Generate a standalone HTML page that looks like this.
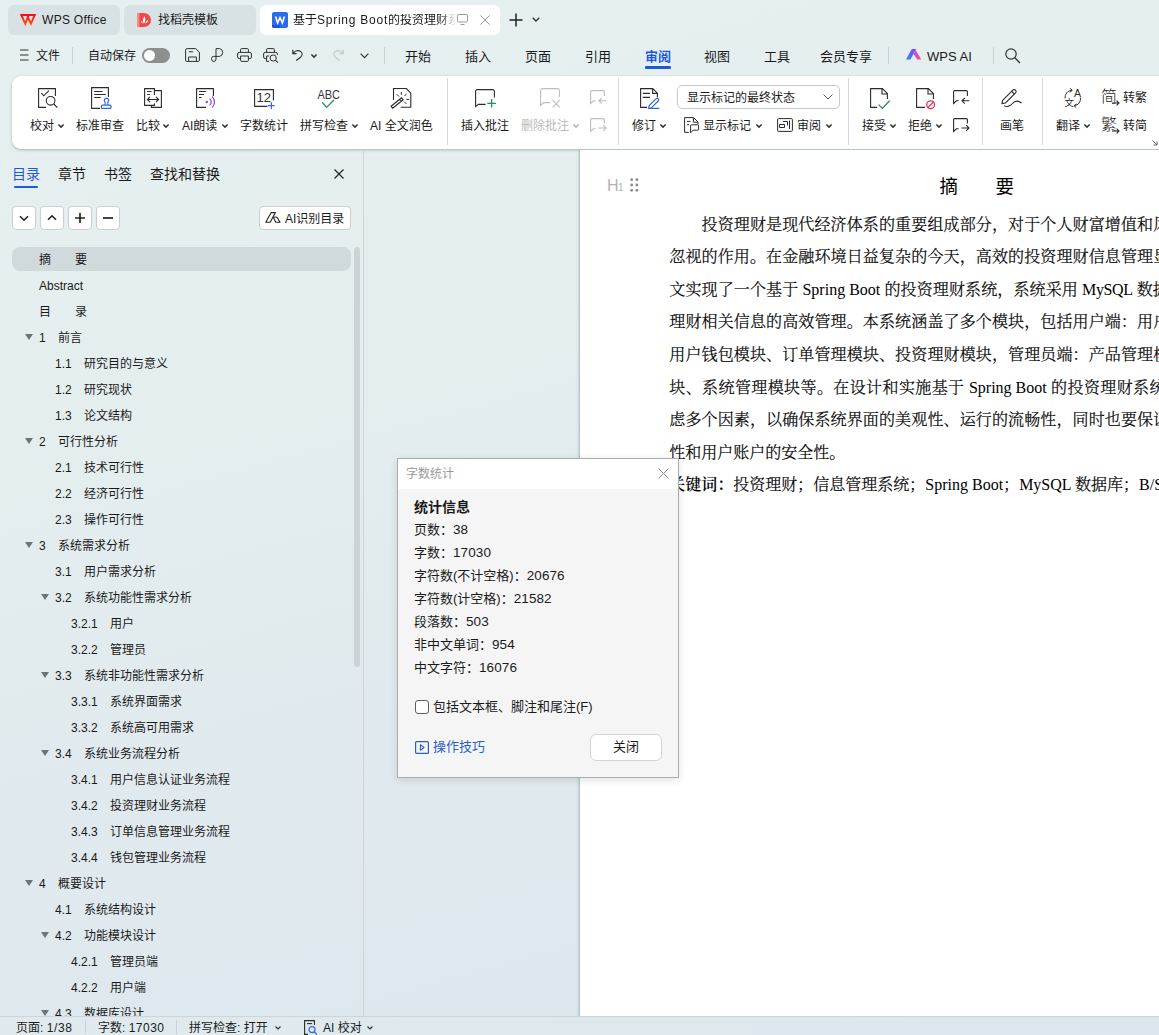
<!DOCTYPE html>
<html lang="zh-CN">
<head>
<meta charset="utf-8">
<title>WPS Office</title>
<style>
*{box-sizing:border-box;margin:0;padding:0}
html,body{width:1159px;height:1035px;overflow:hidden}
body{font-family:"Liberation Sans","Noto Sans CJK SC",sans-serif;font-size:13px;color:#1a1a1a;background:#e3edef;position:relative}
#app{position:absolute;left:0;top:0;width:1159px;height:1035px;overflow:hidden;background:linear-gradient(165deg,#e6f0f0 0%,#e4eeef 35%,#dfe9ee 70%,#dae6ee 100%)}
.abs{position:absolute}
svg{position:absolute;overflow:visible}
.t{position:absolute;white-space:nowrap;line-height:1}
/* ---------- title tabs ---------- */
.tab{position:absolute;top:5px;height:30px;border-radius:6px;background:#d8e1e4}
.tab.act{background:#fff}
.tab .t{top:9px;font-size:12px;color:#1a1a1a}
/* ---------- menu row ---------- */
.menu .t{top:50px;font-size:12px;color:#1a1a1a}
.menu .m{font-size:13px;top:50px}
.vsep{position:absolute;width:1px;background:#c9d3d7}
/* ---------- ribbon ---------- */
#ribbon{position:absolute;left:12px;top:75.500px;width:1160px;height:73.500px;background:#fff;border-radius:9px 0 0 9px;box-shadow:0 1px 3px rgba(100,120,130,.5)}
.rb .t{font-size:12px;color:#1a1a1a}
.rb .dis{color:#b9b9b9}
/* ---------- sidebar ---------- */
.stab{font-size:14px;top:167px}
.sbtn{position:absolute;top:206px;width:24px;height:24px;border:1px solid #c8cfd2;border-radius:4px;background:#fff}
.row{position:absolute;left:0;height:26px;width:352px;font-size:12px;color:#1a1a1a}
.row .t{top:8px}
.tri{position:absolute;top:10px;width:0;height:0;border-left:4px solid transparent;border-right:4px solid transparent;border-top:6px solid #6d7376}
/* ---------- document ---------- */
#page{position:absolute;left:579px;top:150px;width:600px;height:867px;background:#fff;border-left:1px solid #bcc1c4;box-shadow:-1px 0 2px rgba(120,140,150,.25)}
.en{letter-spacing:0;-webkit-text-stroke:0}
.en2{-webkit-text-stroke:0}
.dl{position:absolute;left:89.300px;margin-top:.5px;white-space:nowrap;font-family:"Liberation Serif","Noto Serif CJK SC",serif;font-weight:300;-webkit-text-stroke:.22px #000;font-size:16px;line-height:32px;height:32px;color:#000}
/* ---------- dialog ---------- */
#dlg{position:absolute;left:397px;top:458px;width:282px;height:320px;background:#f5f5f5;border:1px solid #a9adb0;box-shadow:0 2px 8px rgba(0,0,0,.12)}
#dlg .hd{position:absolute;left:0;top:0;width:280px;height:30px;background:#fff}
#dlg .n{font-size:13.500px;letter-spacing:.1px}
#dlg .t{font-size:13px;color:#1a1a1a;left:16px}
/* ---------- status ---------- */
#status{position:absolute;left:0;top:1016px;width:1159px;height:19px;background:linear-gradient(90deg,#e0eaee,#dbe7ed);border-top:1px solid #ccd6da}
#status .t{top:5px;font-size:12px}
</style>
</head>
<body>
<div id="app">
<!--TABS-->
<div class="tab" style="left:8px;width:112px">
  <svg style="left:12px;top:9px" width="17" height="12" viewBox="0 0 17 12"><defs><linearGradient id="wg" x1="0" y1="0" x2="0" y2="1"><stop offset="0" stop-color="#ff0a1c"/><stop offset="1" stop-color="#ff4d00"/></linearGradient></defs><path d="M1.300 1H7.200M1.300 1L5.300 9.800L8.700 1H14.800L10.900 9.800L8 3.600" fill="none" stroke="url(#wg)" stroke-width="1.900" stroke-linejoin="miter" stroke-linecap="square"/></svg>
  <div class="t" style="left:34px;letter-spacing:.3px">WPS Office</div>
</div>
<div class="tab" style="left:124px;width:132px">
  <svg style="left:13px;top:7px" width="14" height="16" viewBox="0 0 14 16"><path d="M0 1 H7 A7 7 0 0 1 7 15 H0 Z" fill="#ee4a49"/><path d="M0 1 H2.4 V15 H0Z" fill="#f58a86"/><path d="M7 11.5 C5.2 9.5 6 6.3 7.6 4.3 C8.6 6.8 8.6 9.4 7 11.5Z M8.2 11.3 C8.8 9.7 9.9 8.5 11.2 8 C11 9.8 10 11 8.2 11.3Z M5.9 11.2 C5.6 10 4.9 9.3 3.9 9 C4 10.3 4.7 11 5.9 11.2Z" fill="#fff"/></svg>
  <div class="t" style="left:34px">找稻壳模板</div>
</div>
<div class="tab act" style="left:260px;width:240px">
  <svg style="left:12px;top:7px" width="16" height="16" viewBox="0 0 16 16"><rect width="16" height="16" rx="2" fill="#2b6de9"/><path d="M0 13h8v3H2a2 2 0 0 1-2-2z" fill="#1f56c8"/><path d="M3.600 4.400L5.600 10.800L8 5.600L10.400 10.800L12.400 4.400" fill="none" stroke="#fff" stroke-width="1.600" stroke-linejoin="miter"/></svg>
  <div class="t" style="left:33px;width:164px;overflow:hidden;-webkit-mask-image:linear-gradient(90deg,#000 146px,transparent 163px);mask-image:linear-gradient(90deg,#000 146px,transparent 163px);height:16px">基于<span style="letter-spacing:.75px">Spring Boot</span>的投资理财系统的设计</div>
  <svg style="left:197px;top:9px" width="13" height="12" viewBox="0 0 13 12"><rect x="0.5" y="0.5" width="10" height="7.500" rx="1.300" fill="none" stroke="#959a9e" stroke-width="1"/><path d="M3.500 10.500h4" stroke="#959a9e" stroke-width="1"/></svg>
  <svg style="left:219.500px;top:10px" width="10" height="10" viewBox="0 0 10 10"><path d="M.4 .4L9.600 9.600M9.600 .4L.4 9.600" stroke="#959a9e" stroke-width="1"/></svg>
</div>
<svg style="left:509px;top:13px" width="14" height="14" viewBox="0 0 14 14"><path d="M7 0.5V13.5M0.5 7H13.5" stroke="#222" stroke-width="1.5"/></svg>
<svg style="left:532px;top:17px" width="8" height="5" viewBox="0 0 8 5"><path d="M0.7 0.7L4 4L7.3 0.7" fill="none" stroke="#333" stroke-width="1.3"/></svg>
<!--MENU-->
<div class="menu">
  <svg style="left:20px;top:49px" width="9" height="12" viewBox="0 0 9 12"><path d="M0 1h8.5M0 6h8.5M0 11h8.5" stroke="#2e2e2e" stroke-width="1"/></svg>
  <div class="t" style="left:36px">文件</div>
  <div class="vsep" style="left:72px;top:47px;height:17px"></div>
  <div class="t" style="left:88px">自动保存</div>
  <div class="abs" style="left:142px;top:48px;width:28px;height:15px;border-radius:8px;background:#8e8e8e"></div>
  <div class="abs" style="left:144px;top:50px;width:11px;height:11px;border-radius:6px;background:#fff"></div>
  <!-- save -->
  <svg style="left:185px;top:48px" width="15" height="14" viewBox="0 0 15 14"><path d="M0.6 12.4V2.2A1.6 1.6 0 0 1 2.2 .6H10.6L14.4 4.2V12.4A1 1 0 0 1 13.4 13.4H1.6A1 1 0 0 1 .6 12.4Z" fill="none" stroke="#2e2e2e" stroke-width="1"/><path d="M3.6 13.2V9H11.4V13.2M3.8 3.8H8" fill="none" stroke="#2e2e2e" stroke-width="1"/></svg>
  <!-- export/pdf -->
  <svg style="left:211px;top:48px" width="14" height="14" viewBox="0 0 14 14"><path d="M5 .6H8.6A4 4 0 0 1 8.6 8.4H5V.6M5 8.4V11.2A2.2 2.2 0 0 1 .6 11.2V10.4A2 2 0 0 1 2.6 8.4H5" fill="none" stroke="#2e2e2e" stroke-width="1"/></svg>
  <!-- print -->
  <svg style="left:237px;top:48px" width="15" height="14" viewBox="0 0 15 14"><path d="M3.6 4.4V1.6A1 1 0 0 1 4.6 .6H10.4A1 1 0 0 1 11.4 1.6V4.4M3.6 10.6H2.2A1.6 1.6 0 0 1 .6 9V6A1.6 1.6 0 0 1 2.2 4.4H12.8A1.6 1.6 0 0 1 14.4 6V9A1.6 1.6 0 0 1 12.8 10.6H11.4M3.6 8H11.4V12.4A1 1 0 0 1 10.4 13.4H4.6A1 1 0 0 1 3.6 12.4Z" fill="none" stroke="#2e2e2e" stroke-width="1"/></svg>
  <!-- preview -->
  <svg style="left:263px;top:48px" width="16" height="15" viewBox="0 0 16 15"><path d="M3.6 4.4V1.6A1 1 0 0 1 4.6 .6H10.4A1 1 0 0 1 11.4 1.6V4.4M3.6 10.6H2.2A1.6 1.6 0 0 1 .6 9V6A1.6 1.6 0 0 1 2.2 4.4H12.8A1.6 1.6 0 0 1 14.4 6V7M3.6 13.4V8H6.2M3.6 13.4H6" fill="none" stroke="#2e2e2e" stroke-width="1"/><circle cx="10.2" cy="10" r="3.1" fill="none" stroke="#2e2e2e" stroke-width="1"/><path d="M12.5 12.3L15 14.6" stroke="#2e2e2e" stroke-width="1.100"/></svg>
  <!-- undo -->
  <svg style="left:292px;top:49px" width="12" height="12" viewBox="0 0 12 12"><path d="M.8 .8V4.6H4.6M1 4.4C3 1.4 6.6 .9 8.8 2.6C11 4.3 10.3 6.7 8.6 8.2L4.2 11.5" fill="none" stroke="#2e2e2e" stroke-width="1.100"/></svg>
  <svg style="left:311px;top:54px" width="6" height="4" viewBox="0 0 6 4"><path d="M.4 .5L3 3.100L5.600 .5" fill="none" stroke="#333" stroke-width="1.500"/></svg>
  <!-- redo (disabled) -->
  <svg style="left:333px;top:49px" width="12" height="12" viewBox="0 0 12 12"><path d="M10.2 .8V4.6H6.4M10 4.4C8 1.4 4.4 .9 2.2 2.6C0 4.3 .7 6.7 2.4 8.2L6.8 11.5" fill="none" stroke="#c3c9cc" stroke-width="1.2"/></svg>
  <svg style="left:360px;top:53px" width="9" height="6" viewBox="0 0 9 6"><path d="M.6 .6L4.5 4.6L8.4 .6" fill="none" stroke="#333" stroke-width="1.2"/></svg>
  <div class="vsep" style="left:384px;top:47px;height:17px"></div>
  <div class="t m" style="left:405px">开始</div>
  <div class="t m" style="left:465px">插入</div>
  <div class="t m" style="left:525px">页面</div>
  <div class="t m" style="left:585px">引用</div>
  <div class="t m" style="left:645px;color:#1f5ad6;font-weight:bold">审阅</div>
  <div class="abs" style="left:645px;top:66px;width:26px;height:2.500px;border-radius:1.250px;background:#1f5ad6"></div>
  <div class="t m" style="left:704px">视图</div>
  <div class="t m" style="left:764px">工具</div>
  <div class="t m" style="left:820px">会员专享</div>
  <div class="vsep" style="left:888px;top:47px;height:17px"></div>
  <svg style="left:906px;top:49px" width="16" height="11" viewBox="0 0 16 11"><defs><linearGradient id="ai1" x1="0" y1="1" x2="1" y2="0"><stop offset="0" stop-color="#2a86ff"/><stop offset="1" stop-color="#8a48fb"/></linearGradient><linearGradient id="ai2" x1="0" y1="0" x2="1" y2="1"><stop offset="0" stop-color="#b44dfa"/><stop offset="1" stop-color="#ff4f86"/></linearGradient></defs><path d="M0 10.600H4.400L10.300 0H5.800Z" fill="url(#ai1)"/><path d="M7.600 5L9.700 1.200L15.400 10.600H11.200Z" fill="url(#ai2)"/></svg>
  <div class="t m" style="left:927px">WPS AI</div>
  <div class="vsep" style="left:993px;top:47px;height:17px"></div>
  <svg style="left:1005px;top:48px" width="16" height="16" viewBox="0 0 16 16"><circle cx="6" cy="6" r="5.2" fill="none" stroke="#333" stroke-width="1.2"/><path d="M9.8 9.8L15 15" stroke="#333" stroke-width="1.3"/></svg>
</div>
<!--RIBBON-->
<div id="ribbon"></div>
<div class="rb">
  <!-- 校对 -->
  <svg style="left:38px;top:88px" width="20" height="20" viewBox="0 0 20 20"><path d="M8 19.4H.6V.6H17.4V8" stroke="#2b2b2b" stroke-width="1.1" fill="none"/><path d="M3.4 5.2L5.7 7.8L11 2.6" stroke="#2b2b2b" stroke-width="1.1" fill="none"/><circle cx="12.6" cy="12.8" r="4.3" stroke="#2b2b2b" stroke-width="1.1" fill="none"/><path d="M15.8 16L19.4 19.6" stroke="#2b2b2b" stroke-width="1.1" fill="none"/></svg>
  <div class="t" style="left:30px;top:119.500px">校对</div><svg style="left:58px;top:124px" width="6" height="4" viewBox="0 0 6 4"><path d="M.4 .5L3 3.100L5.600 .5" fill="none" stroke="#333" stroke-width="1.500"/></svg>
  <!-- 标准审查 -->
  <svg style="left:91px;top:87px" width="21" height="22" viewBox="0 0 21 22"><path d="M9 21.400H.6V.6H17.400V10" stroke="#2b2b2b" stroke-width="1.1" fill="none"/><path d="M3.200 4.500H11.600M3.200 7.500H14.800M3.200 10.500H9.700" stroke="#2b2b2b" stroke-width="1.1" fill="none"/><path d="M13.800 18.200C14.600 16.800 14.400 15.800 13.800 14.600A2.100 2.100 0 1 1 17.200 14.600C16.600 15.800 16.400 16.800 17.200 18.200M11.400 18.200H19A1 1 0 0 1 20 19.200V20.400A1 1 0 0 1 19 21.400H11.400A1 1 0 0 1 10.400 20.400V19.200A1 1 0 0 1 11.400 18.200Z" fill="none" stroke="#2f62ea" stroke-width="1.200"/></svg>
  <div class="t" style="left:76px;top:119.500px">标准审查</div>
  <!-- 比较 -->
  <svg style="left:144px;top:88px" width="19" height="20" viewBox="0 0 19 20"><path d="M10.400 7V.6H.6V17.400H10.400V15.400" stroke="#2b2b2b" stroke-width="1.1" fill="none"/><path d="M10.400 2.600H17.400V19.400H7.400V17.400" stroke="#2b2b2b" stroke-width="1.1" fill="none"/><path d="M3.200 3.500H7.600M3.200 6.500H5.800" stroke="#2b2b2b" stroke-width="1.1" fill="none"/><path d="M3.400 11.500H14.600M6 8.900L3.400 11.500L6 14.100M12 8.900L14.600 11.500L12 14.100" stroke="#2b2b2b" stroke-width="1.1" fill="none"/></svg>
  <div class="t" style="left:136px;top:119.500px">比较</div><svg style="left:163px;top:124px" width="6" height="4" viewBox="0 0 6 4"><path d="M.4 .5L3 3.100L5.600 .5" fill="none" stroke="#333" stroke-width="1.500"/></svg>
  <!-- AI朗读 -->
  <svg style="left:196px;top:88px" width="20" height="20" viewBox="0 0 20 20"><path d="M10 19.400H.6V.6H17.400V8" stroke="#2b2b2b" stroke-width="1.1" fill="none"/><path d="M3 3.500H10.200M3 6.500H8M3 9.500H5.600" stroke="#2b2b2b" stroke-width="1.1" fill="none"/><circle cx="10.800" cy="14" r="1.200" fill="#8b44f0"/><path d="M13.600 10.600A4.500 4.500 0 0 1 13.600 17.400M16 8.400A7.600 7.600 0 0 1 16 19.600" fill="none" stroke="#8b44f0" stroke-width="1.200"/></svg>
  <div class="t" style="left:182px;top:119.500px">AI朗读</div><svg style="left:222px;top:124px" width="6" height="4" viewBox="0 0 6 4"><path d="M.4 .5L3 3.100L5.600 .5" fill="none" stroke="#333" stroke-width="1.500"/></svg>
  <!-- 字数统计 -->
  <svg style="left:254px;top:89px" width="22" height="20" viewBox="0 0 22 20"><path d="M13.500 17.400H.6V.6H19.400V11.500" stroke="#2b2b2b" stroke-width="1.1" fill="none"/><text x="2.400" y="13.300" font-family="Liberation Sans, sans-serif" font-size="13.500" fill="#333" textLength="14.500" lengthAdjust="spacingAndGlyphs">12</text><path d="M17.400 13.200V20M14 16.600H20.800" stroke="#2f66ee" stroke-width="1.200" fill="none"/></svg>
  <div class="t" style="left:240px;top:119.500px">字数统计</div>
  <!-- 拼写检查 -->
  <svg style="left:317px;top:88px" width="24" height="21" viewBox="0 0 24 21"><text x=".5" y="10.800" font-family="Liberation Sans, sans-serif" font-size="13.500" fill="#333" textLength="22.500" lengthAdjust="spacingAndGlyphs">ABC</text><path d="M5.300 14.400L9.500 19.400L17 12" fill="none" stroke="#1c8f5c" stroke-width="1.300"/></svg>
  <div class="t" style="left:300px;top:119.500px">拼写检查</div><svg style="left:352px;top:124px" width="6" height="4" viewBox="0 0 6 4"><path d="M.4 .5L3 3.100L5.600 .5" fill="none" stroke="#333" stroke-width="1.500"/></svg>
  <!-- AI 全文润色 -->
  <svg style="left:391px;top:87px" width="21" height="22" viewBox="0 0 21 22"><path d="M2.500 13V1.500H15.400L19.800 6.200V20.200H9.700" stroke="#2b2b2b" stroke-width="1.1" fill="none"/><path d="M0 19.200L1.600 21.200L12.200 12.800L10.600 10.800ZM8.500 12.500L10.100 14.500" stroke="#2b2b2b" stroke-width="1.1" fill="none" stroke-linejoin="round"/><path d="M10.300 5.100V7.900M15.400 6.800L13.700 9M15.400 12.400H18.200M13.100 14.600L15.400 16.900M5.800 7.300L8.100 9.600" stroke="#2b2b2b" stroke-width="1" fill="none"/></svg>
  <div class="t" style="left:370px;top:119.500px">AI 全文润色</div>
  <div class="vsep" style="left:447px;top:78px;height:67px;background:#d6d8da"></div>
  <!-- 插入批注 -->
  <svg style="left:475px;top:89px" width="22" height="20" viewBox="0 0 22 20"><path d="M19.400 8.600V2.200A1.600 1.600 0 0 0 17.800 .6H2.200A1.600 1.600 0 0 0 .6 2.200V17.600L3.400 15.400H10.600" stroke="#2b2b2b" stroke-width="1.1" fill="none" stroke-width="1.300"/><path d="M16.600 10V18.600M12.300 14.300H20.900" stroke="#1c8f5c" stroke-width="1.300" fill="none"/></svg>
  <div class="t" style="left:461px;top:119.500px">插入批注</div>
  <!-- 删除批注 -->
  <svg style="left:540px;top:88px" width="22" height="20" viewBox="0 0 22 20"><path d="M19.400 9V2.200A1.600 1.600 0 0 0 17.800 .6H2.200A1.600 1.600 0 0 0 .6 2.200V17.400L3.600 14.600H10M12.600 12.200L19.800 19.400M19.800 12.200L12.600 19.400" fill="none" stroke="#bdbdbd" stroke-width="1.100"/></svg>
  <div class="t dis" style="left:521px;top:119.500px">删除批注</div><svg style="left:573px;top:124px" width="6" height="4" viewBox="0 0 6 4"><path d="M.4 .5L3 3.100L5.600 .5" fill="none" stroke="#b5b5b5" stroke-width="1.500"/></svg>
  <svg style="left:590px;top:90px" width="17" height="14" viewBox="0 0 17 14"><path d="M14.400 6V1.600A1 1 0 0 0 13.400 .6H1.600A1 1 0 0 0 .6 1.600V13.400L3.400 10.800H5.600M9 10.800H16.200M11.800 8L9 10.800L11.800 13.600" fill="none" stroke="#bdbdbd" stroke-width="1.100"/></svg>
  <svg style="left:590px;top:118px" width="17" height="14" viewBox="0 0 17 14"><path d="M14.400 5.600V1.600A1 1 0 0 0 13.400 .6H1.600A1 1 0 0 0 .6 1.600V13.400L3.400 10.800H5.600M8.400 10H16M13.200 7.200L16 10L13.200 12.800" fill="none" stroke="#bdbdbd" stroke-width="1.100"/></svg>
  <div class="vsep" style="left:618px;top:78px;height:67px;background:#d6d8da"></div>
  <!-- 修订 -->
  <svg style="left:640px;top:88px" width="22" height="21" viewBox="0 0 22 21"><path d="M7 19.400H.6V.6H12.800L17.400 5.200V9.600M12.600 .8V5.400H17.200" stroke="#2b2b2b" stroke-width="1.1" fill="none"/><path d="M2.800 5.400H10M2.800 9.400H10" stroke="#2b2b2b" stroke-width="1.1" fill="none"/><path d="M8.600 20.200L9.200 17.600L16 10.800A1.500 1.500 0 0 1 18.200 13L11.400 19.800L8.600 20.200ZM8.600 20.400H19.400" fill="none" stroke="#2f66ee" stroke-width="1.200"/></svg>
  <div class="t" style="left:632px;top:119.500px">修订</div><svg style="left:659.500px;top:124px" width="6" height="4" viewBox="0 0 6 4"><path d="M.4 .5L3 3.100L5.600 .5" fill="none" stroke="#333" stroke-width="1.500"/></svg>
  <div class="abs" style="left:677px;top:85px;width:163px;height:24px;border:1px solid #c6c9cb;border-radius:5px;background:#fff"></div>
  <div class="t" style="left:687px;top:92px">显示标记的最终状态</div>
  <svg style="left:823px;top:94px" width="10" height="6" viewBox="0 0 10 6"><path d="M.6 .6L5 5L9.400 .6" fill="none" stroke="#555" stroke-width="1"/></svg>
  <!-- 显示标记 -->
  <svg style="left:684px;top:117px" width="16" height="17" viewBox="0 0 16 17"><path d="M4.800 15.400H.6V.6H9.600L14 5V7.400M9.400 .8V5.200H13.800" stroke="#2b2b2b" stroke-width="1" fill="none"/><path d="M3 4.400H6.600M3 7.700H5.200" stroke="#2b2b2b" stroke-width="1" fill="none"/><path d="M6.600 15.800V8.600A.8 .8 0 0 1 7.400 7.800H13.800A.8 .8 0 0 1 14.600 8.600V12.400A.8 .8 0 0 1 13.800 13.200H9.200Z" stroke="#2b2b2b" stroke-width="1" fill="none" stroke-linejoin="round"/></svg>
  <div class="t" style="left:703px;top:119.500px">显示标记</div><svg style="left:756px;top:124px" width="6" height="4" viewBox="0 0 6 4"><path d="M.4 .5L3 3.100L5.600 .5" fill="none" stroke="#333" stroke-width="1.500"/></svg>
  <!-- 审阅 -->
  <svg style="left:777px;top:118px" width="16" height="14" viewBox="0 0 16 14"><rect x=".6" y=".6" width="14.800" height="12.800" rx="1" stroke="#2b2b2b" stroke-width="1" fill="none" stroke-width="1.100"/><path d="M6 3.500H10.500V7.500M2.500 6.500H7.500V9.500H2.500ZM12.500 2.500V11" stroke="#2b2b2b" stroke-width="1" fill="none"/></svg>
  <div class="t" style="left:797px;top:119.500px">审阅</div><svg style="left:826px;top:124px" width="6" height="4" viewBox="0 0 6 4"><path d="M.4 .5L3 3.100L5.600 .5" fill="none" stroke="#333" stroke-width="1.500"/></svg>
  <div class="vsep" style="left:848px;top:78px;height:67px;background:#d6d8da"></div>
  <!-- 接受 -->
  <svg style="left:869px;top:88px" width="22" height="22" viewBox="0 0 22 22"><path d="M8 19.400H1.600V.6H13.400L18.400 5.600V11M13 .8V6H18.200" stroke="#2b2b2b" stroke-width="1.1" fill="none"/><path d="M9.600 16.600L13.400 20.400L20.600 12.800" fill="none" stroke="#1c8f5c" stroke-width="1.300"/></svg>
  <div class="t" style="left:862px;top:119.500px">接受</div><svg style="left:890px;top:124px" width="6" height="4" viewBox="0 0 6 4"><path d="M.4 .5L3 3.100L5.600 .5" fill="none" stroke="#333" stroke-width="1.500"/></svg>
  <!-- 拒绝 -->
  <svg style="left:916px;top:88px" width="20" height="22" viewBox="0 0 20 22"><path d="M9 19.400H.6V.6H12.400L17.400 5.600V11M12 .8V6H17.200" stroke="#2b2b2b" stroke-width="1.1" fill="none"/><circle cx="14.600" cy="16.800" r="3.900" fill="none" stroke="#e0334f" stroke-width="1.300"/><path d="M11.800 19.600L17.400 14" stroke="#e0334f" stroke-width="1.300"/></svg>
  <div class="t" style="left:908px;top:119.500px">拒绝</div><svg style="left:936px;top:124px" width="6" height="4" viewBox="0 0 6 4"><path d="M.4 .5L3 3.100L5.600 .5" fill="none" stroke="#333" stroke-width="1.500"/></svg>
  <svg style="left:953px;top:90px" width="17" height="14" viewBox="0 0 17 14"><path d="M14.400 6V1.600A1 1 0 0 0 13.400 .6H1.600A1 1 0 0 0 .6 1.600V13.400L3.400 10.800H5.600M9 10.800H16.200M11.800 8L9 10.800L11.800 13.600" stroke="#2b2b2b" stroke-width="1.1" fill="none"/></svg>
  <svg style="left:953px;top:118px" width="17" height="14" viewBox="0 0 17 14"><path d="M14.400 5.600V1.600A1 1 0 0 0 13.400 .6H1.600A1 1 0 0 0 .6 1.600V13.400L3.400 10.800H5.600M8.400 10H16M13.200 7.200L16 10L13.200 12.800" stroke="#2b2b2b" stroke-width="1.1" fill="none"/></svg>
  <div class="vsep" style="left:982px;top:78px;height:67px;background:#d6d8da"></div>
  <!-- 画笔 -->
  <svg style="left:1001px;top:89px" width="22" height="18" viewBox="0 0 22 18"><path d="M1.600 11.400L11.800 1.200A1.800 1.800 0 0 1 14.600 3.800L4.400 14L1 14.600Z" stroke="#2b2b2b" stroke-width="1.1" fill="none"/><path d="M10.800 2.400L13.400 5" stroke="#2b2b2b" stroke-width="1.1" fill="none"/><path d="M3 16.600C6 18.400 9.500 17 11.500 14.500C13.500 12 17 11.400 20.600 14" stroke="#2b2b2b" stroke-width="1.1" fill="none"/></svg>
  <div class="t" style="left:1000px;top:119.500px">画笔</div>
  <div class="vsep" style="left:1042px;top:78px;height:67px;background:#d6d8da"></div>
  <!-- 翻译 -->
  <svg style="left:1064px;top:88px" width="18" height="20" viewBox="0 0 18 20"><path d="M1.200 10.400C.6 6.400 3.400 2.600 8 2.300M6 .3L8.300 2.300L5.800 4.300" stroke="#2b2b2b" stroke-width="1" fill="none"/><path d="M16.400 9.600C17 13.600 14.400 17.300 10.200 17.700M12.600 15.900L10 17.700L12.200 19.700" stroke="#2b2b2b" stroke-width="1" fill="none"/><text x="10" y="8.900" font-family="Liberation Sans, sans-serif" font-size="10.500" fill="#2b2b2b">A</text><text x=".6" y="17.800" font-family="Liberation Sans, Noto Sans CJK SC, sans-serif" font-size="9.500" fill="#2b2b2b">文</text></svg>
  <div class="t" style="left:1056px;top:119.500px">翻译</div><svg style="left:1084px;top:124px" width="6" height="4" viewBox="0 0 6 4"><path d="M.4 .5L3 3.100L5.600 .5" fill="none" stroke="#333" stroke-width="1.500"/></svg>
  <!-- 简转繁 -->
  <div class="t" style="left:1101px;top:88.500px;font-size:16px;color:#222;font-weight:300">简</div>
  <svg style="left:1112px;top:99.500px" width="8" height="6" viewBox="0 0 8 6"><path d="M0 3H7M4.600 .6L7 3L4.600 5.400" stroke="#2b2b2b" stroke-width="1.1" fill="none"/></svg>
  <div class="t" style="left:1123px;top:92px">转繁</div>
  <div class="t" style="left:1101px;top:116.500px;font-size:16px;color:#222;font-weight:300">繁</div>
  <svg style="left:1112px;top:127.500px" width="8" height="6" viewBox="0 0 8 6"><path d="M0 3H7M4.600 .6L7 3L4.600 5.400" stroke="#2b2b2b" stroke-width="1.1" fill="none"/></svg>
  <div class="t" style="left:1123px;top:119.500px">转简</div>
  <svg style="left:1152px;top:140px" width="6" height="6" viewBox="0 0 6 6"><path d="M.5 .5L5 5M5 1.500V5H1.500" fill="none" stroke="#666" stroke-width="1"/></svg>
</div>
<!--SIDEBAR-->
<div id="side">
  <div class="vsep" style="left:363px;top:150px;height:867px;width:1.400px;background:#d3d3d4"></div>
  <div class="t stab" style="left:12px;color:#1f5ad6">目录</div>
  <div class="abs" style="left:14px;top:186px;width:24px;height:2px;background:#1f5ad6;border-radius:1px"></div>
  <div class="t stab" style="left:58px">章节</div>
  <div class="t stab" style="left:104px">书签</div>
  <div class="t stab" style="left:150px">查找和替换</div>
  <svg style="left:334px;top:169px" width="10" height="10" viewBox="0 0 10 10"><path d="M.5 .5L9.500 9.500M9.500 .5L.5 9.500" stroke="#222" stroke-width="1.200"/></svg>
  <div class="sbtn" style="left:12px"><svg style="left:5px;top:5px" width="12" height="12" viewBox="0 0 12 12"><path d="M2 4.200L6 8.200L10 4.200" fill="none" stroke="#222" stroke-width="1.600"/></svg></div>
  <div class="sbtn" style="left:40px"><svg style="left:5px;top:5px" width="12" height="12" viewBox="0 0 12 12"><path d="M2 7.800L6 3.800L10 7.800" fill="none" stroke="#222" stroke-width="1.600"/></svg></div>
  <div class="sbtn" style="left:68px"><svg style="left:5px;top:5px" width="12" height="12" viewBox="0 0 12 12"><path d="M6 1V11M1 6H11" fill="none" stroke="#222" stroke-width="1.700"/></svg></div>
  <div class="sbtn" style="left:96px"><svg style="left:5px;top:5px" width="12" height="12" viewBox="0 0 12 12"><path d="M1 6H11" fill="none" stroke="#222" stroke-width="1.700"/></svg></div>
  <div class="abs" style="left:259px;top:206px;width:92px;height:24px;border:1px solid #c8cfd2;border-radius:4px;background:#fff"></div>
  <svg style="left:265px;top:212px" width="16" height="11" viewBox="0 0 16 11"><path d="M.8 10.200H5.200L10.400 .6H6.200Z" fill="none" stroke="#222" stroke-width="1.100" stroke-linejoin="round"/><path d="M7.600 5.600C9.600 4.400 12 5 12.800 6.400L15 10.200H10.800L8.600 6" fill="none" stroke="#222" stroke-width="1.100" stroke-linejoin="round"/></svg>
  <div class="t" style="left:285px;top:213px;font-size:12px">AI识别目录</div>
  <div class="abs" style="left:12px;top:247px;width:339px;height:24px;border-radius:8px;background:#d0d9dc"></div>
  <div class="abs" style="left:354px;top:247px;width:6px;height:420px;border-radius:3px;background:#ccd3d6"></div>
  <div class="row" style="top:246px"><div class="t" style="left:39px">摘　　要</div></div>
  <div class="row" style="top:272px"><div class="t" style="left:39px">Abstract</div></div>
  <div class="row" style="top:298px"><div class="t" style="left:39px">目　　录</div></div>
  <div class="row" style="top:324px"><div class="tri" style="left:25px"></div><div class="t" style="left:39px">1</div><div class="t" style="left:58px">前言</div></div>
  <div class="row" style="top:350px"><div class="t" style="left:55px">1.1</div><div class="t" style="left:84px">研究目的与意义</div></div>
  <div class="row" style="top:376px"><div class="t" style="left:55px">1.2</div><div class="t" style="left:84px">研究现状</div></div>
  <div class="row" style="top:402px"><div class="t" style="left:55px">1.3</div><div class="t" style="left:84px">论文结构</div></div>
  <div class="row" style="top:428px"><div class="tri" style="left:25px"></div><div class="t" style="left:39px">2</div><div class="t" style="left:58px">可行性分析</div></div>
  <div class="row" style="top:454px"><div class="t" style="left:55px">2.1</div><div class="t" style="left:84px">技术可行性</div></div>
  <div class="row" style="top:480px"><div class="t" style="left:55px">2.2</div><div class="t" style="left:84px">经济可行性</div></div>
  <div class="row" style="top:506px"><div class="t" style="left:55px">2.3</div><div class="t" style="left:84px">操作可行性</div></div>
  <div class="row" style="top:532px"><div class="tri" style="left:25px"></div><div class="t" style="left:39px">3</div><div class="t" style="left:58px">系统需求分析</div></div>
  <div class="row" style="top:558px"><div class="t" style="left:55px">3.1</div><div class="t" style="left:84px">用户需求分析</div></div>
  <div class="row" style="top:584px"><div class="tri" style="left:41px"></div><div class="t" style="left:55px">3.2</div><div class="t" style="left:84px">系统功能性需求分析</div></div>
  <div class="row" style="top:610px"><div class="t" style="left:71px">3.2.1</div><div class="t" style="left:110px">用户</div></div>
  <div class="row" style="top:636px"><div class="t" style="left:71px">3.2.2</div><div class="t" style="left:110px">管理员</div></div>
  <div class="row" style="top:662px"><div class="tri" style="left:41px"></div><div class="t" style="left:55px">3.3</div><div class="t" style="left:84px">系统非功能性需求分析</div></div>
  <div class="row" style="top:688px"><div class="t" style="left:71px">3.3.1</div><div class="t" style="left:110px">系统界面需求</div></div>
  <div class="row" style="top:714px"><div class="t" style="left:71px">3.3.2</div><div class="t" style="left:110px">系统高可用需求</div></div>
  <div class="row" style="top:740px"><div class="tri" style="left:41px"></div><div class="t" style="left:55px">3.4</div><div class="t" style="left:84px">系统业务流程分析</div></div>
  <div class="row" style="top:766px"><div class="t" style="left:71px">3.4.1</div><div class="t" style="left:110px">用户信息认证业务流程</div></div>
  <div class="row" style="top:792px"><div class="t" style="left:71px">3.4.2</div><div class="t" style="left:110px">投资理财业务流程</div></div>
  <div class="row" style="top:818px"><div class="t" style="left:71px">3.4.3</div><div class="t" style="left:110px">订单信息管理业务流程</div></div>
  <div class="row" style="top:844px"><div class="t" style="left:71px">3.4.4</div><div class="t" style="left:110px">钱包管理业务流程</div></div>
  <div class="row" style="top:870px"><div class="tri" style="left:25px"></div><div class="t" style="left:39px">4</div><div class="t" style="left:58px">概要设计</div></div>
  <div class="row" style="top:896px"><div class="t" style="left:55px">4.1</div><div class="t" style="left:84px">系统结构设计</div></div>
  <div class="row" style="top:922px"><div class="tri" style="left:41px"></div><div class="t" style="left:55px">4.2</div><div class="t" style="left:84px">功能模块设计</div></div>
  <div class="row" style="top:948px"><div class="t" style="left:71px">4.2.1</div><div class="t" style="left:110px">管理员端</div></div>
  <div class="row" style="top:974px"><div class="t" style="left:71px">4.2.2</div><div class="t" style="left:110px">用户端</div></div>
  <div class="row" style="top:1000px"><div class="tri" style="left:41px"></div><div class="t" style="left:55px">4.3</div><div class="t" style="left:84px">数据库设计</div></div>
</div>
<!--PAGE-->
<div id="page">
  <div class="t" style="left:27px;top:28px;font-size:16px;color:#b3b3b3;font-weight:300;letter-spacing:-.5px">H<span style="font-size:10px;font-weight:400">1</span></div>
  <svg style="left:50px;top:28px" width="9" height="14" viewBox="0 0 9 14"><g fill="#8a8a8a"><circle cx="1.700" cy="1.700" r="1.400"/><circle cx="6.900" cy="1.700" r="1.400"/><circle cx="1.700" cy="7" r="1.400"/><circle cx="6.900" cy="7" r="1.400"/><circle cx="1.700" cy="12.300" r="1.400"/><circle cx="6.900" cy="12.300" r="1.400"/></g></svg>
  <div class="t" style="left:359.500px;top:28px;font-size:18.500px;font-weight:400;color:#000">摘<span style="margin-left:37.500px">要</span></div>
  <div class="dl" style="top:58.0px;letter-spacing:0.13px">　　投资理财是现代经济体系的重要组成部分，对于个人财富增值和风险管理具有不可</div>
  <div class="dl" style="top:90.6px;letter-spacing:0.13px">忽视的作用。在金融环境日益复杂的今天，高效的投资理财信息管理显得尤为重要。本</div>
  <div class="dl" style="top:123.2px;letter-spacing:0.13px">文实现了一个基于 <span class="en">Spring Boot</span> 的投资理财系统，系统采用 <span class="en" style="letter-spacing:-.4px">MySQL</span> 数据库，实现了对投资</div>
  <div class="dl" style="top:155.8px;letter-spacing:0.13px">理财相关信息的高效管理。本系统涵盖了多个模块，包括用户端：用户信息认证模块、</div>
  <div class="dl" style="top:188.4px;letter-spacing:0.13px">用户钱包模块、订单管理模块、投资理财模块，管理员端：产品管理模块、用户管理模</div>
  <div class="dl" style="top:221.0px;letter-spacing:0.4px">块、系统管理模块等。在设计和实施基于 <span class="en">Spring Boot</span> 的投资理财系统时，我们需要考</div>
  <div class="dl" style="top:253.6px;letter-spacing:0.13px">虑多个因素，以确保系统界面的美观性、运行的流畅性，同时也要保证投资数据的准确</div>
  <div class="dl" style="top:286.2px;letter-spacing:0px">性和用户账户的安全性。</div>
  <div class="dl" style="top:318.8px;letter-spacing:0px"><b style="font-weight:600;-webkit-text-stroke:0">关键词：</b>投资理财；信息管理系统；<span class="en2">Spring Boot</span>；<span class="en2">MySQL</span> 数据库；<span class="en2">B/S</span> 架构</div>
</div>
<!--DIALOG-->
<div id="dlg">
  <div class="hd"></div>
  <div class="t" style="left:8px;top:9px;font-size:12px;color:#9b9b9b">字数统计</div>
  <svg style="left:260px;top:9px" width="11" height="11" viewBox="0 0 11 11"><path d="M.5 .5L10.500 10.500M10.500 .5L.5 10.500" stroke="#8c8c8c" stroke-width="1"/></svg>
  <div class="t" style="top:41px;font-size:14px;font-weight:bold">统计信息</div>
  <div class="t" style="top:64px">页数：<span class="n">38</span></div>
  <div class="t" style="top:87px">字数：<span class="n">17030</span></div>
  <div class="t" style="top:110px">字符数(不计空格)：<span class="n">20676</span></div>
  <div class="t" style="top:133px">字符数(计空格)：<span class="n">21582</span></div>
  <div class="t" style="top:156px">段落数：<span class="n">503</span></div>
  <div class="t" style="top:179px">非中文单词：<span class="n">954</span></div>
  <div class="t" style="top:202px">中文字符：<span class="n">16076</span></div>
  <div class="abs" style="left:17px;top:241px;width:14px;height:14px;border:1px solid #5f5f5f;border-radius:3px;background:#fff"></div>
  <div class="t" style="left:35px;top:241px">包括文本框、脚注和尾注(F)</div>
  <svg style="left:17px;top:282px" width="14" height="13" viewBox="0 0 14 13"><rect x=".6" y=".6" width="12.800" height="11.800" rx="1" fill="none" stroke="#2b5fc7" stroke-width="1.200"/><path d="M5.400 3.800L9 6.500L5.400 9.200Z" fill="none" stroke="#2b5fc7" stroke-width="1.100" stroke-linejoin="round"/></svg>
  <div class="t" style="left:35px;top:281px;color:#2b5fc7">操作技巧</div>
  <div class="abs" style="left:192px;top:275px;width:72px;height:27px;border:1px solid #d4d4d4;border-radius:6px;background:#fff"></div>
  <div class="t" style="left:215px;top:281px">关闭</div>
</div>
<!--STATUS-->
<div id="status">
  <div class="t" style="left:16px">页面: <span style="letter-spacing:.6px">1/38</span></div>
  <div class="vsep" style="left:85px;top:3px;height:14px"></div>
  <div class="t" style="left:98px">字数: <span style="letter-spacing:.5px">17030</span></div>
  <div class="vsep" style="left:176px;top:3px;height:14px"></div>
  <div class="t" style="left:189px">拼写检查: 打开</div>
  <svg style="left:275px;top:9px" width="6" height="4" viewBox="0 0 6 4"><path d="M.5 .5L3 3L5.500 .5" fill="none" stroke="#333" stroke-width="1.200"/></svg>
  <svg style="left:304px;top:3px" width="14" height="15" viewBox="0 0 14 15"><path d="M4 14.400H.6V.6H10.400V5" fill="none" stroke="#2b2b2b" stroke-width="1.100"/><path d="M3 3.600H8" stroke="#2b2b2b" stroke-width="1.100"/><circle cx="8" cy="9.600" r="3" fill="none" stroke="#2f66ee" stroke-width="1.200"/><path d="M10.200 11.800L13 14.600" stroke="#2f66ee" stroke-width="1.300"/></svg>
  <div class="t" style="left:323px">AI 校对</div>
  <svg style="left:367px;top:9px" width="6" height="4" viewBox="0 0 6 4"><path d="M.5 .5L3 3L5.500 .5" fill="none" stroke="#333" stroke-width="1.200"/></svg>
</div>
</div>
</body>
</html>
